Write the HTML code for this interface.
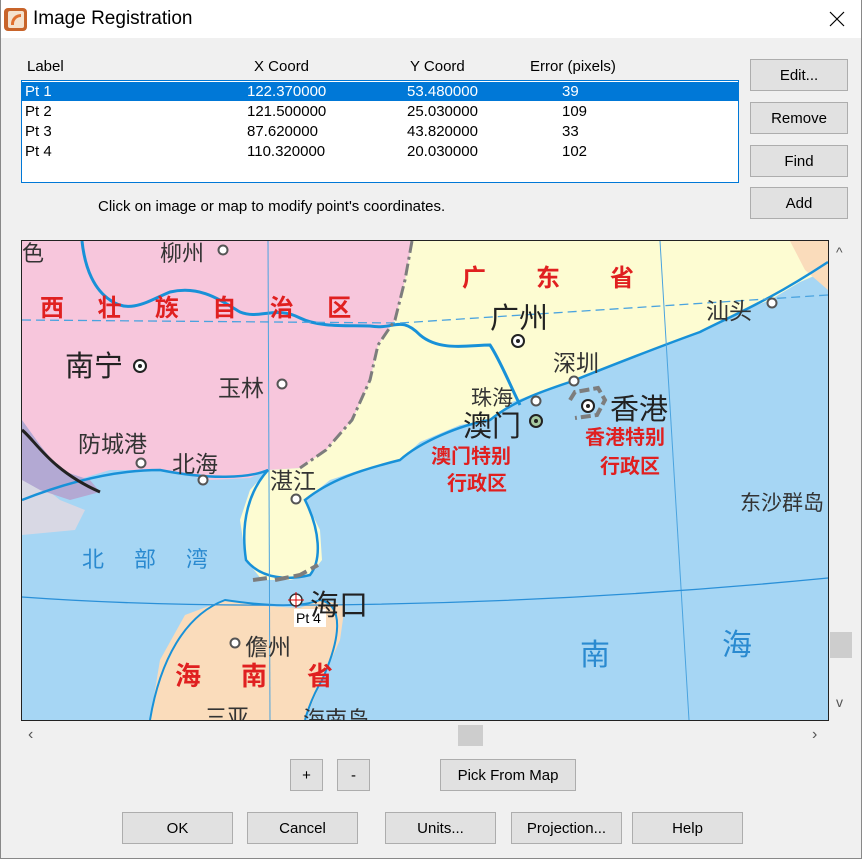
<!DOCTYPE html>
<html><head><meta charset="utf-8"><style>
body{margin:0;width:862px;height:859px;background:#f0f0f0;font-family:"Liberation Sans","Microsoft YaHei",sans-serif;font-size:15px;position:relative;overflow:hidden;color:#000}
.a{position:absolute}
.btn{position:absolute;background:#e1e1e1;border:1px solid #adadad;box-sizing:border-box;text-align:center;font-size:15px;line-height:32px}
.cjk{font-family:"Noto Sans CJK SC","WenQuanYi Zen Hei",sans-serif}
</style></head><body>
<div class="a" style="left:0;top:0;width:862px;height:38px;background:#fff"></div>
<div class="a" style="left:0;top:0;width:1px;height:859px;background:#888"></div>
<div class="a" style="left:861px;top:0;width:1px;height:859px;background:#888"></div>
<div class="a" style="left:0;top:858px;width:862px;height:1px;background:#888"></div>
<div class="a" style="left:4px;top:8px;width:23px;height:23px;background:#c8642a;border-radius:4px"></div>
<div class="a" style="left:8px;top:11px;width:16px;height:17px;background:#f4e2cf;border-radius:2px"></div>
<div class="a" style="left:11px;top:14px;width:10px;height:11px;border-radius:10px 0 0 0;border-top:3px solid #e07030;border-left:3px solid #e07030;box-sizing:border-box"></div>
<div class="a" style="left:33px;top:8px;font-size:19px">Image Registration</div>
<svg class="a" style="left:829px;top:11px" width="16" height="16"><path d="M1,1 L15,15 M15,1 L1,15" stroke="#000" stroke-width="1.2"/></svg>

<div class="a" style="left:27px;top:58px">Label</div>
<div class="a" style="left:254px;top:58px">X Coord</div>
<div class="a" style="left:410px;top:58px">Y Coord</div>
<div class="a" style="left:530px;top:58px">Error (pixels)</div>
<div class="a" style="left:21px;top:80px;width:718px;height:103px;background:#fff;border:1px solid #0078d7;box-sizing:border-box"></div>
<div class="a" style="left:22px;top:82px;width:716px;height:19px;background:#0078d7"></div>
<div class="a" style="left:25px;top:83px;color:#fff;font-size:15px;line-height:18px">Pt 1</div>
<div class="a" style="left:247px;top:83px;color:#fff;line-height:18px">122.370000</div>
<div class="a" style="left:407px;top:83px;color:#fff;line-height:18px">53.480000</div>
<div class="a" style="left:562px;top:83px;color:#fff;line-height:18px">39</div>
<div class="a" style="left:25px;top:103px;line-height:18px">Pt 2</div><div class="a" style="left:247px;top:103px;line-height:18px">121.500000</div><div class="a" style="left:407px;top:103px;line-height:18px">25.030000</div><div class="a" style="left:562px;top:103px;line-height:18px">109</div>
<div class="a" style="left:25px;top:123px;line-height:18px">Pt 3</div><div class="a" style="left:247px;top:123px;line-height:18px">87.620000</div><div class="a" style="left:407px;top:123px;line-height:18px">43.820000</div><div class="a" style="left:562px;top:123px;line-height:18px">33</div>
<div class="a" style="left:25px;top:143px;line-height:18px">Pt 4</div><div class="a" style="left:247px;top:143px;line-height:18px">110.320000</div><div class="a" style="left:407px;top:143px;line-height:18px">20.030000</div><div class="a" style="left:562px;top:143px;line-height:18px">102</div>
<div class="a" style="left:98px;top:198px">Click on image or map to modify point's coordinates.</div>

<div class="btn" style="left:750px;top:59px;width:98px;height:32px">Edit...</div>
<div class="btn" style="left:750px;top:102px;width:98px;height:32px">Remove</div>
<div class="btn" style="left:750px;top:145px;width:98px;height:32px">Find</div>
<div class="btn" style="left:750px;top:187px;width:98px;height:32px">Add</div>

<svg class="a" style="left:21px;top:240px" width="808" height="481" viewBox="21 240 808 481">
<rect x="21" y="240" width="808" height="481" fill="#a6d6f4"/>
<polygon fill="#f7c6dc" points="22,241 412,241 405,280 395,320 378,345 370,380 352,420 326,450 300,468 268,470 250,478 210,480 160,470 110,470 60,485 22,500"/>
<polygon fill="#fdfcd2" points="412,241 800,241 828,262 828,270 800,282 770,300 740,312 700,332 650,350 600,370 570,382 540,392 512,402 490,420 460,425 420,442 400,460 360,470 330,480 305,500 320,530 322,560 310,575 290,580 262,580 246,560 240,520 250,490 268,470 300,468 326,450 352,420 370,380 378,345 395,320 405,280"/>
<polygon fill="#fadcbb" points="790,241 828,241 828,290 805,270"/>
<polygon fill="#d8d8e4" points="22,470 60,500 85,510 75,530 22,535"/>
<polygon fill="#b3a9d3" points="22,420 40,445 60,470 90,480 100,492 70,500 40,490 22,480"/>
<polygon fill="#fadcbb" points="150,720 160,660 185,615 225,600 265,606 300,608 320,600 345,605 340,640 322,680 305,720"/>
<g fill="none" stroke="#1891d8" stroke-width="3">
<path d="M82,241 C85,270 95,290 110,300 C130,315 150,300 170,292 C200,285 220,300 240,312 C260,320 275,305 300,318 C320,328 350,325 370,326 C395,330 400,315 420,335 C440,352 470,345 490,345 C500,360 510,385 520,405"/>
<path d="M22,500 C60,485 110,470 160,470 C210,480 250,478 268,470 C250,490 240,520 246,560 C262,580 290,580 310,575 C322,560 320,530 305,500 C330,480 360,470 400,460 C420,442 460,425 490,420 C512,402 540,392 570,382 C600,370 650,350 700,332 C740,312 770,300 828,262" stroke-width="2.5"/>
<path d="M150,720 C160,660 185,615 225,600 C265,606 300,608 320,600 C345,605 340,640 322,680 C310,700 305,720 305,720" stroke-width="2"/>
</g>
<line x1="268" y1="241" x2="270" y2="720" stroke="#4aa3df" stroke-width="1"/>
<line x1="660" y1="241" x2="689" y2="720" stroke="#4aa3df" stroke-width="1"/>
<path d="M22,597 C200,610 500,610 828,578" stroke="#2a90d8" stroke-width="1.3" fill="none"/>
<path d="M22,320 L400,323 L828,295" stroke="#4aa3df" stroke-width="1.3" stroke-dasharray="9,5" fill="none"/>
<path d="M412,241 L405,280 L395,320 L378,345 L370,380 L352,420 L326,450 L300,468" stroke="#7d7d7d" stroke-width="3" stroke-dasharray="12,4,3,4" fill="none"/>
<path d="M253,580 L268,578 M275,580 L300,575 L318,565" stroke="#7d7d7d" stroke-width="4" stroke-dasharray="14,5" fill="none"/>
<path d="M570,400 L575,392 L598,388 L605,400 L597,415 L575,418" stroke="#7d7d7d" stroke-width="4" stroke-dasharray="10,4" fill="none"/>
<path d="M22,430 C35,440 50,470 100,492" stroke="#222" stroke-width="3" fill="none"/>
<g fill="#fff" stroke="#555" stroke-width="2">
<circle cx="223" cy="250" r="4.5"/><circle cx="282" cy="384" r="4.5"/><circle cx="141" cy="463" r="4.5"/><circle cx="203" cy="480" r="4.5"/><circle cx="296" cy="499" r="4.5"/><circle cx="574" cy="381" r="4.5"/><circle cx="536" cy="401" r="4.5"/><circle cx="772" cy="303" r="4.5"/><circle cx="235" cy="643" r="4.5"/>
</g>
<g fill="#fff" stroke="#222" stroke-width="2"><circle cx="140" cy="366" r="6"/><circle cx="518" cy="341" r="6"/><circle cx="588" cy="406" r="6"/><circle cx="536" cy="421" r="6" fill="#a6c9a0"/></g>
<g fill="#222"><circle cx="140" cy="366" r="2"/><circle cx="518" cy="341" r="2"/><circle cx="588" cy="406" r="2"/><circle cx="536" cy="421" r="2"/></g>
<circle cx="296" cy="600" r="6" fill="#fff" stroke="#333" stroke-width="1.5"/>
<path d="M288,600 H304 M296,592 V608" stroke="#d00" stroke-width="1"/>
<rect x="294" y="609" width="32" height="18" fill="#fff"/>
</svg>
<div class="a cjk" style="left:0;top:0;width:862px;height:859px;pointer-events:none">
<div class="a" style="left:22px;top:236px;font-size:22px;color:#333">色</div>
<div class="a" style="left:160px;top:236px;font-size:22px;color:#333">柳州</div>
<div class="a" style="left:40px;top:288px;font-size:24px;color:#e02020;font-weight:bold;letter-spacing:14px">西 壮 族 自 治 区</div>
<div class="a" style="left:462px;top:258px;font-size:24px;color:#e02020;font-weight:bold;letter-spacing:50px">广东省</div>
<div class="a" style="left:65px;top:343px;font-size:29px;color:#222">南宁</div>
<div class="a" style="left:218px;top:369px;font-size:23px;color:#333">玉林</div>
<div class="a" style="left:78px;top:425px;font-size:23px;color:#333">防城港</div>
<div class="a" style="left:172px;top:445px;font-size:23px;color:#333">北海</div>
<div class="a" style="left:270px;top:462px;font-size:23px;color:#333">湛江</div>
<div class="a" style="left:490px;top:295px;font-size:29px;color:#222">广州</div>
<div class="a" style="left:706px;top:292px;font-size:23px;color:#333">汕头</div>
<div class="a" style="left:553px;top:344px;font-size:23px;color:#333">深圳</div>
<div class="a" style="left:471px;top:382px;font-size:21px;color:#333">珠海</div>
<div class="a" style="left:463px;top:403px;font-size:29px;color:#222">澳门</div>
<div class="a" style="left:610px;top:386px;font-size:29px;color:#222">香港</div>
<div class="a" style="left:431px;top:440px;font-size:20px;color:#e02020;font-weight:bold">澳门特别</div>
<div class="a" style="left:447px;top:467px;font-size:20px;color:#e02020;font-weight:bold">行政区</div>
<div class="a" style="left:585px;top:421px;font-size:20px;color:#e02020;font-weight:bold">香港特别</div>
<div class="a" style="left:600px;top:450px;font-size:20px;color:#e02020;font-weight:bold">行政区</div>
<div class="a" style="left:740px;top:487px;font-size:21px;color:#333;white-space:nowrap;width:88px;overflow:hidden">东沙群岛</div>
<div class="a" style="left:82px;top:542px;font-size:22px;color:#2a8ad0;letter-spacing:30px">北部湾</div>
<div class="a" style="left:310px;top:582px;font-size:29px;color:#222">海口</div>
<div class="a" style="left:296px;top:610px;font-size:14px;color:#000;font-family:'Liberation Sans';">Pt 4</div>
<div class="a" style="left:245px;top:628px;font-size:23px;color:#333">儋州</div>
<div class="a" style="left:175px;top:656px;font-size:26px;color:#e02020;font-weight:bold;letter-spacing:40px">海南省</div>
<div class="a" style="left:580px;top:630px;font-size:30px;color:#2a8ad0">南</div>
<div class="a" style="left:722px;top:620px;font-size:30px;color:#2a8ad0">海</div>
<div class="a" style="left:205px;top:700px;font-size:22px;color:#333;height:20px;overflow:hidden">三亚</div>
<div class="a" style="left:303px;top:702px;font-size:22px;color:#333;height:18px;overflow:hidden">海南岛</div>
</div>
<div class="a" style="left:21px;top:240px;width:808px;height:481px;border:1px solid #222;box-sizing:border-box"></div>
<div class="a" style="left:836px;top:244px;font-size:14px;color:#555">^</div>
<div class="a" style="left:836px;top:694px;font-size:14px;color:#555">v</div>
<div class="a" style="left:830px;top:632px;width:22px;height:26px;background:#cdcdcd"></div>
<div class="a" style="left:28px;top:726px;font-size:16px;color:#555">‹</div>
<div class="a" style="left:812px;top:726px;font-size:16px;color:#555">›</div>
<div class="a" style="left:458px;top:725px;width:25px;height:21px;background:#cdcdcd"></div>

<div class="btn" style="left:290px;top:759px;width:33px;height:32px">+</div>
<div class="btn" style="left:337px;top:759px;width:33px;height:32px">-</div>
<div class="btn" style="left:440px;top:759px;width:136px;height:32px">Pick From Map</div>
<div class="btn" style="left:122px;top:812px;width:111px;height:32px">OK</div>
<div class="btn" style="left:247px;top:812px;width:111px;height:32px">Cancel</div>
<div class="btn" style="left:385px;top:812px;width:111px;height:32px">Units...</div>
<div class="btn" style="left:511px;top:812px;width:111px;height:32px">Projection...</div>
<div class="btn" style="left:632px;top:812px;width:111px;height:32px">Help</div>
</body></html>
